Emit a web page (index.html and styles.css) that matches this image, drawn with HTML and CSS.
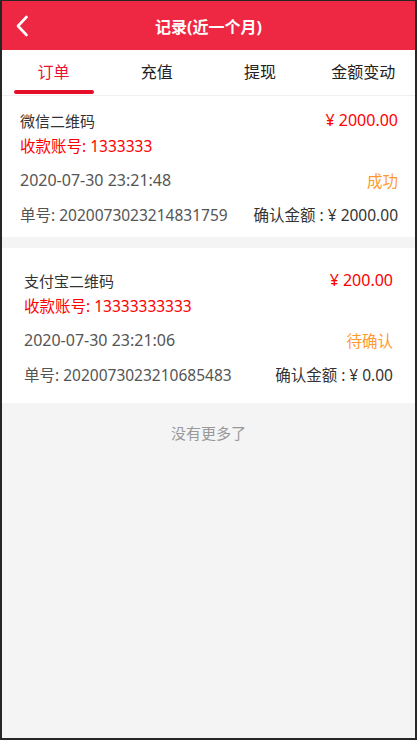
FILE: index.html
```html
<!DOCTYPE html>
<html lang="zh-CN">
<head>
<meta charset="utf-8">
<title>记录(近一个月)</title>
<link rel="stylesheet" href="styles.css">
</head>
<body>
<div class="frame">
  <header class="topbar">
    <span class="back">
      <svg width="14" height="22" viewBox="0 0 14 22"><path d="M11.5 2 L3 11 L11.5 20" fill="none" stroke="#fff" stroke-width="2.6" stroke-linecap="round" stroke-linejoin="round"/></svg>
    </span>
    <h1 class="title">记录(近一个月)</h1>
  </header>
  <nav class="tabs">
    <div class="tab active">订单</div>
    <div class="tab">充值</div>
    <div class="tab">提现</div>
    <div class="tab">金额变动</div>
  </nav>
  <main class="list">
    <section class="card card-a">
      <div class="row r1"><span class="name">微信二维码</span><span class="amt">¥ 2000.00</span></div>
      <div class="row r2"><span class="acct">收款账号: 1333333</span></div>
      <div class="row r3"><span class="date">2020-07-30 23:21:48</span><span class="st ok">成功</span></div>
      <div class="row r4"><span class="no">单号: 2020073023214831759</span><span class="conf">确认金额 : ¥ 2000.00</span></div>
    </section>
    <section class="card card-b">
      <div class="row r1"><span class="name">支付宝二维码</span><span class="amt">¥ 200.00</span></div>
      <div class="row r2"><span class="acct">收款账号: 13333333333</span></div>
      <div class="row r3"><span class="date">2020-07-30 23:21:06</span><span class="st">待确认</span></div>
      <div class="row r4"><span class="no">单号: 2020073023210685483</span><span class="conf">确认金额 : ¥ 0.00</span></div>
    </section>
    <p class="end">没有更多了</p>
  </main>
</div>
</body>
</html>
```
FILE: styles.css
```css
* { box-sizing: border-box; }
html, body { margin: 0; padding: 0; }
body {
  font-family: "Noto Sans", "Noto Sans CJK SC", sans-serif;
  background: #262626;
}
.frame {
  width: 417px;
  height: 740px;
  border-style: solid;
  border-color: #262626;
  border-width: 1px 2px 2px 2px;
  background: #f4f4f4;
  overflow: hidden;
  display: flex;
  flex-direction: column;
}
.topbar {
  height: 49px;
  background: #ee2742;
  display: flex;
  align-items: center;
  justify-content: center;
  position: relative;
}
.back {
  position: absolute;
  left: 13px;
  top: 14px;
  display: flex;
}
.title {
  margin: 0;
  color: #fff;
  font-size: 16px;
  font-weight: bold;
}
.tabs {
  height: 46px;
  background: #fff;
  display: flex;
  border-bottom: 1px solid #efefef;
}
.tab {
  flex: 1;
  text-align: center;
  font-size: 16px;
  color: #222;
  padding-top: 9px;
  position: relative;
}
.tab.active { color: #e8132f; }
.tab.active::after {
  content: "";
  position: absolute;
  left: 12px;
  width: 80px;
  bottom: 1px;
  height: 4px;
  border-radius: 2px;
  background: #e60f2a;
}
.list { display: flex; flex-direction: column; }
.card {
  background: #fff;
  display: flex;
  flex-direction: column;
}
.card-a { padding: 12px 17px 8px 18px; margin-bottom: 11px; }
.card-b { padding: 20px 22px 14px 22px; }
.row {
  display: flex;
  justify-content: space-between;
  align-items: center;
  white-space: nowrap;
}
.r1 { height: 24px; }
.r2 { height: 26px; }
.r3 { height: 41px; padding-top: 3px; }
.r4 { height: 30px; }
.name { font-size: 15px; color: #333; }
.amt { font-size: 16px; color: #ff0000; }
.acct { font-size: 15.5px; color: #ff0000; }
.date { font-size: 16px; color: #555; }
.st { font-size: 15.5px; color: #ff9a2e; }
.no { font-size: 15.5px; color: #555; }
.conf { font-size: 15.5px; color: #333; }
.end {
  margin: 19px 0 0;
  text-align: center;
  font-size: 15px;
  color: #999;
}
```
